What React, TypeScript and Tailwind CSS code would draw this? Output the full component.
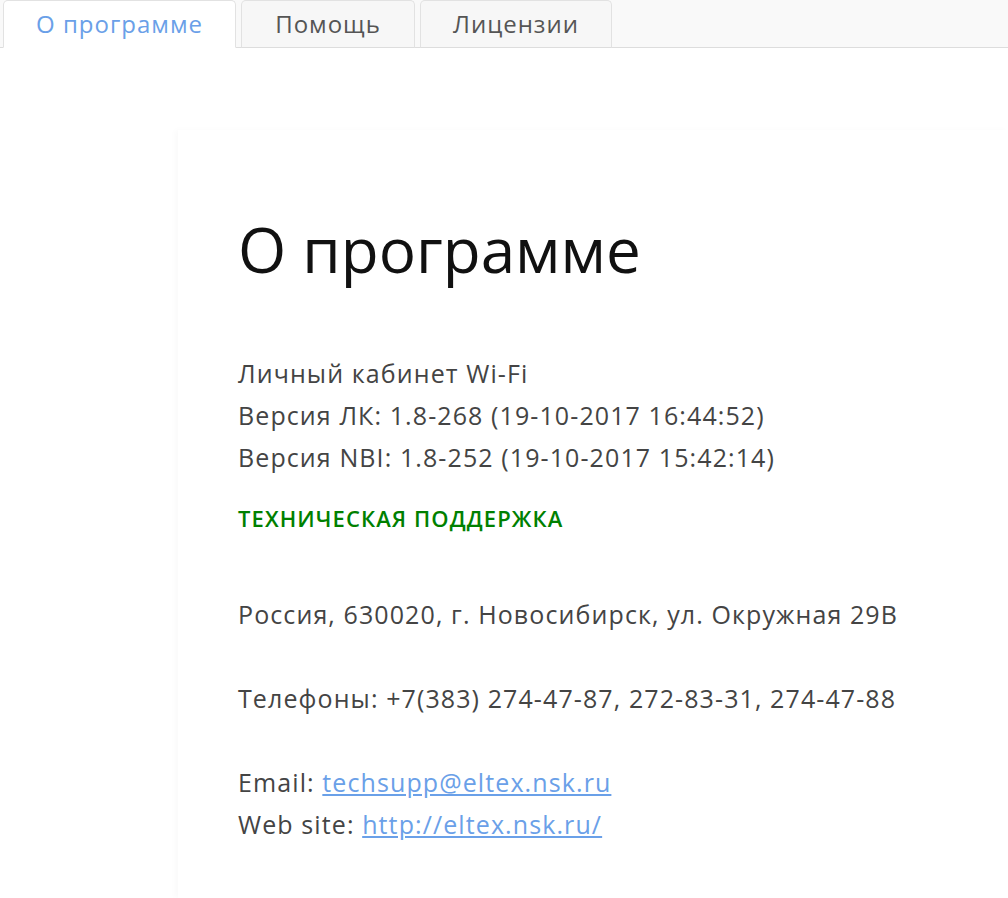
import React from "react";

// Tabs for the "about" screen
const TABS = [
  { label: "О программе", active: true, w: "w-[233px]" },
  { label: "Помощь", active: false, w: "w-[174px]" },
  { label: "Лицензии", active: false, w: "w-[192px]" },
];

export default function App() {
  return (
    <div
      className="min-h-[898px] bg-white text-[#444]"
      style={{ fontFamily: '"Open Sans", "Liberation Sans", sans-serif' }}
    >
      {/* Tab bar */}
      <div className="h-[48px] bg-[#f9f9f9] border-b border-[#dddddd] flex items-end pl-[3px] gap-[5px]">
        {TABS.map((t) => (
          <div
            key={t.label}
            className={`${t.w} h-[48px] -mb-px flex items-center justify-center rounded-t-[5px] border border-[#e2e2e2] text-[24px] tracking-[1px] leading-none ${
              t.active
                ? "bg-white border-b-white text-[#6aa0e8]"
                : "bg-[#f7f7f7] border-b-[#dddddd] text-[#555]"
            }`}
          >
            <span className="-mt-[1px]">{t.label}</span>
          </div>
        ))}
      </div>

      {/* Content panel */}
      <div className="flex">
        <div className="w-[178px] shrink-0" />
        <div className="flex-1 mt-[82px] min-h-[768px] pl-[60px] shadow-[-3px_0_6px_rgba(0,0,0,0.025)]">
          <h1 className="pt-[84px] text-[62px] leading-[70px] text-[#111] font-normal">
            О программе
          </h1>

          <div className="mt-[68px] text-[25px] tracking-[1.1px] leading-[42px]">
            <div>Личный кабинет Wi-Fi</div>
            <div>Версия ЛК: 1.8-268 (19-10-2017 16:44:52)</div>
            <div>Версия NBI: 1.8-252 (19-10-2017 15:42:14)</div>
          </div>

          <div className="mt-[26px] text-[22px] tracking-[1.1px] leading-[28px] font-semibold text-[#008000]">
            ТЕХНИЧЕСКАЯ ПОДДЕРЖКА
          </div>

          <div className="mt-[61px] text-[25px] tracking-[1.1px] leading-[42px]">
            <div>Россия, 630020, г. Новосибирск, ул. Окружная 29В</div>
            <div>&nbsp;</div>
            <div>Телефоны: +7(383) 274-47-87, 272-83-31, 274-47-88</div>
            <div>&nbsp;</div>
            <div>
              Email:{" "}
              <a href="#" className="text-[#6aa0e8] underline">
                techsupp@eltex.nsk.ru
              </a>
            </div>
            <div>
              Web site:{" "}
              <a href="#" className="text-[#6aa0e8] underline">
                http://eltex.nsk.ru/
              </a>
            </div>
          </div>
        </div>
      </div>
    </div>
  );
}
